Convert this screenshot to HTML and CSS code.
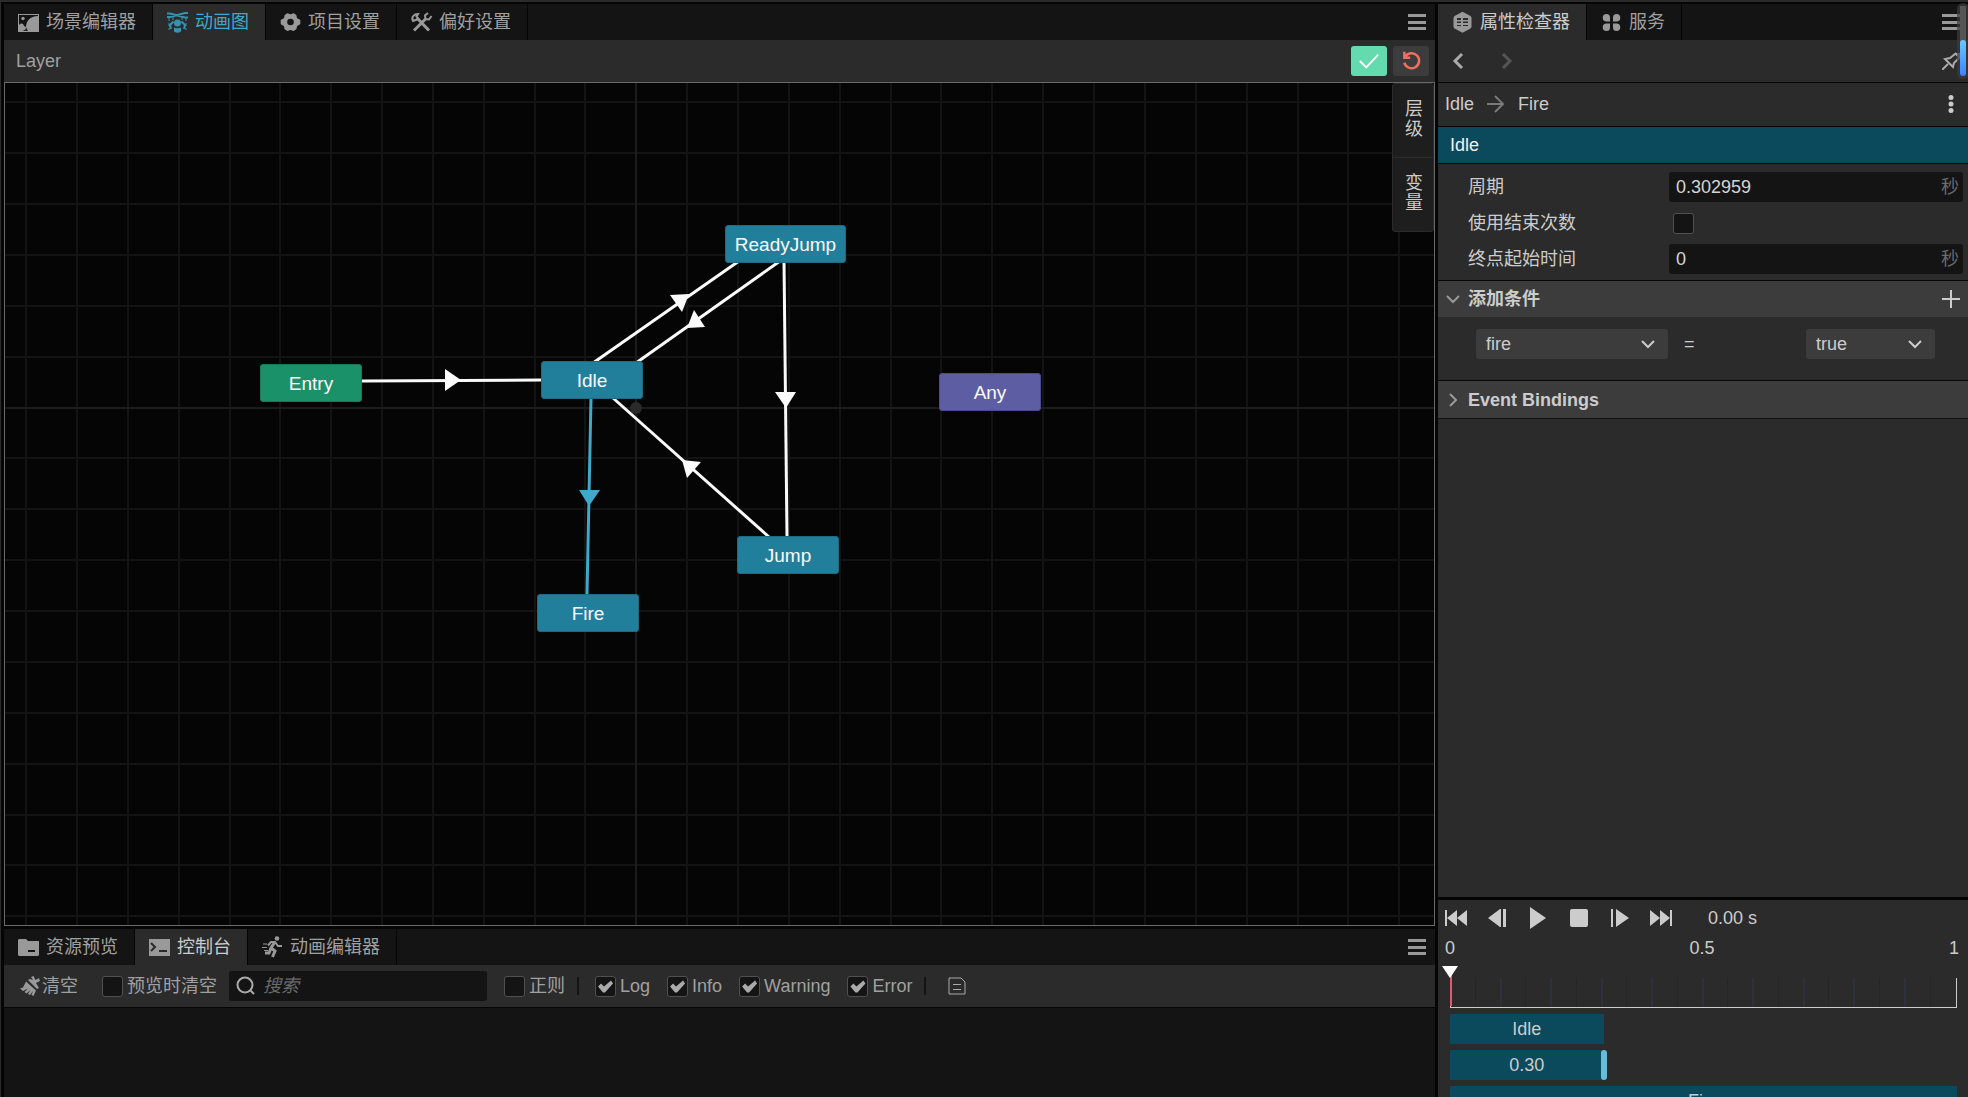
FILE: index.html
```html
<!DOCTYPE html>
<html lang="zh-CN">
<head>
<meta charset="utf-8">
<meta name="viewport" content="width=device-width, initial-scale=1">
<title>动画图</title>
<link rel="stylesheet" href="styles.css">
</head>
<body>
<div class="app">
  <main class="workspace">
    <section class="panel graph-panel">
      <div class="tabbar" role="tablist">
        <button class="tab" role="tab" type="button">
          <svg class="icon" viewBox="0 0 21 21"><path d="M0 2h21v18H0z M1 3v16h19V3z" fill-rule="evenodd"/><circle cx="5" cy="6.500" r="1.700"/><path d="M1 19v-6c2-2 4-2 5 1l2 1c0-6 4-11 12-11v15z"/><path class="cut" d="M4 19c3-.5 4-2 4-4l2 4z"/></svg>
          <span>场景编辑器</span>
        </button>
        <button class="tab tab-on tab-accent" role="tab" type="button" aria-selected="true">
          <svg class="icon" viewBox="0 0 21 21"><path class="line2" d="M0 1.500h3l15 4h3M21 1h-3L3 5H0"/><path class="thin dash" d="M2 6v5M19 6v5M6 5v4M15 5v4M2 11v7M19 11v7"/><circle cx="10.500" cy="11" r="3.500"/><path class="line2" d="M6.500 9.500 3 13l1 4M14.500 9.500 18 13l-1 4"/><path d="M7 15.500c2 1 5 1 7 0v4c-1 1.500-6 1.500-7 0z"/></svg>
          <span>动画图</span>
        </button>
        <button class="tab" role="tab" type="button">
          <svg class="icon" viewBox="0 0 21 21"><path fill-rule="evenodd" d="M7 1.500c1-.8 2 .7 3.500.7S13 .7 14 1.500l2 1.200c1 .7.4 2.600 1.200 3.600.8.900 2.800.8 3.100 2v3.400c-.3 1.200-2.300 1.300-3.100 2.300-.8 1-.2 2.900-1.200 3.600l-2 1.200c-1 .6-2-.7-3.500-.7s-2.500 1.300-3.500.7l-2-1.200c-1-.7-.4-2.600-1.200-3.600S1 13 .7 11.700V8.300c.3-1.200 2.300-1.100 3.100-2S4 3.400 5 2.700zM10.500 6.700a3.300 3.300 0 1 0 0 6.600 3.300 3.300 0 0 0 0-6.600z"/></svg>
          <span>项目设置</span>
        </button>
        <button class="tab" role="tab" type="button">
          <svg class="icon" viewBox="0 0 21 21"><path class="line3" d="M6 6l12 12.500M3 18.500 14.500 7"/><path class="line2" d="M2 9C0 5 3 2 7 2L5.500 4.500 7.500 7z"/><path class="line2" d="M17 1l-3 2.500.5 3.500 3.500.5 2.500-3.500"/></svg>
          <span>偏好设置</span>
        </button>
        <button class="menu" type="button" aria-label="菜单"><svg viewBox="0 0 18 18"><path d="M0 1h18v3H0zM0 8h18v3H0zM0 14h18v3H0z"/></svg></button>
      </div>
      <div class="graph-bar">
        <span class="layer-name">Layer</span>
        <button class="act act-apply" type="button" aria-label="应用"><svg viewBox="0 0 24 24"><path d="M2 12l7 7L22 5"/></svg></button>
        <button class="act act-reset" type="button" aria-label="还原"><svg viewBox="0 0 24 24"><path d="M5 7A9 9 0 1 1 4 14M4 1v7h7"/></svg></button>
      </div>
      <div class="canvas">
        <svg class="wires" aria-hidden="true">
          <g transform="translate(-5 -83)">
            <path class="grid" d="M26 0V2000M77 0V2000M128 0V2000M179 0V2000M230 0V2000M280 0V2000M331 0V2000M382 0V2000M433 0V2000M484 0V2000M535 0V2000M585 0V2000M687 0V2000M738 0V2000M789 0V2000M840 0V2000M891 0V2000M941 0V2000M992 0V2000M1043 0V2000M1094 0V2000M1145 0V2000M1196 0V2000M1247 0V2000M1298 0V2000M1348 0V2000M1399 0V2000M0 102H3000M0 153H3000M0 204H3000M0 255H3000M0 306H3000M0 357H3000M0 458H3000M0 509H3000M0 560H3000M0 611H3000M0 662H3000M0 713H3000M0 764H3000M0 815H3000M0 865H3000M0 916H3000"/>
            <path class="grid axis" d="M636 0V2000M0 408H3000"/>
            <circle class="origin" cx="636" cy="408" r="6"/>
            <g class="wire">
              <path d="M362 381L542 380"/><path class="head" d="M445 369v22l16-11z"/>
              <path d="M593 363L739 261"/><path class="head" d="M670 295l12 17 7-18z"/>
              <path d="M780 261L636 363"/><path class="head" d="M694 310l11 17-18 1z"/>
              <path d="M784 261L787 537"/><path class="head" d="M775 392h21l-10 16z"/>
              <path d="M769 537L613 398"/><path class="head" d="M701 462l-14 16-5-18z"/>
            </g>
            <g class="wire selected">
              <path d="M591 398L587 594"/><path class="head" d="M579 490h21l-11 16z"/>
            </g>
          </g>
        </svg>
        <div class="node entry">Entry</div>
        <div class="node idle">Idle</div>
        <div class="node ready">ReadyJump</div>
        <div class="node any">Any</div>
        <div class="node jump">Jump</div>
        <div class="node fire">Fire</div>
        <div class="side-tabs">
          <button type="button">层级</button>
          <button type="button">变量</button>
        </div>
      </div>
    </section>

    <section class="panel console">
      <div class="tabbar" role="tablist">
        <button class="tab" role="tab" type="button">
          <svg class="icon" viewBox="0 0 21 21"><path fill-rule="evenodd" d="M1 2h7l2 2h11v14l-1 1H1l-1-1V3zM10 13v2h7v-2z"/></svg>
          <span>资源预览</span>
        </button>
        <button class="tab tab-on" role="tab" type="button" aria-selected="true">
          <svg class="icon" viewBox="0 0 21 21"><path d="M0 2h21v17H0z"/><path class="cut" d="M10 13h8v2h-8z"/><path class="cut-line" d="M2 6l4 4-4 4"/></svg>
          <span>控制台</span>
        </button>
        <button class="tab" role="tab" type="button">
          <svg class="icon" viewBox="0 0 21 21"><circle cx="15" cy="1.500" r="2.300"/><path class="line3" d="M12.500 5.500 9 11l4 3-2.500 6M9 11l-2 5H3"/><path class="line2" d="M6 8.500 9 5h4l3 4h4"/><path class="thin" d="M1 7h4M0 10.500h5M2 13.500h4"/></svg>
          <span>动画编辑器</span>
        </button>
        <button class="menu" type="button" aria-label="菜单"><svg viewBox="0 0 18 18"><path d="M0 1h18v3H0zM0 8h18v3H0zM0 14h18v3H0z"/></svg></button>
      </div>
      <div class="console-bar">
        <button class="clear" type="button">
          <svg viewBox="0 0 20 20"><path d="M11 1l2.500-1 2 4L19 2l1 3-4 2 3 5-2 1L8 4l2-1 3 1z"/><path d="M6 5.500l10 9L13.500 20l-2-1 1.500-4-3 4-2-1 2.500-4-4 3.500-2-1.500L8 12.500 3 15l-3-2.500 3-1z"/></svg>
          <span>清空</span>
        </button>
        <label class="check"><input type="checkbox"><span>预览时清空</span></label>
        <div class="search">
          <svg viewBox="0 0 20 20"><circle cx="9" cy="9" r="7.500"/><path d="M14 14l4 4"/></svg>
          <input type="text" placeholder="搜索" aria-label="搜索">
        </div>
        <label class="check regex"><input type="checkbox"><span>正则</span></label>
        <i class="sep"></i>
        <div class="levels">
          <label class="check"><input type="checkbox" checked><span>Log</span></label>
          <label class="check"><input type="checkbox" checked><span>Info</span></label>
          <label class="check"><input type="checkbox" checked><span>Warning</span></label>
          <label class="check"><input type="checkbox" checked><span>Error</span></label>
        </div>
        <i class="sep"></i>
        <button class="log-file" type="button" aria-label="日志文件"><svg viewBox="0 0 18 18"><path d="M1 1h12l4 4v12H1zM5 7.500h8M5 12.500h8"/></svg></button>
      </div>
    </section>
  </main>

  <aside class="sidebar">
    <section class="panel inspector">
      <div class="tabbar" role="tablist">
        <button class="tab tab-on" role="tab" type="button" aria-selected="true">
          <svg class="icon" viewBox="0 0 21 21"><path d="M10 0q.5-.3 1 0l7.500 4 1 1.500v9.500l-1 1.500-7.500 4q-.5.300-1 0l-7.500-4-1-1.500V5.500l1-1.500z"/><path class="cut" d="M5 6h4v2H5zM11 6h5v2h-5zM5 9.500h4v1.500H5zM11 9.500h5v1.500h-5zM5 13h4v1H5zM11 13h5v1h-5z"/></svg>
          <span>属性检查器</span>
        </button>
        <button class="tab" role="tab" type="button">
          <svg class="icon" viewBox="0 0 21 21"><path d="M5.500 2A3.500 3.500 0 0 1 9 5.500v4H5.500a3.700 3.700 0 1 1 0-7.500zM15.500 2a3.700 3.700 0 1 1 0 7.500H12v-4A3.500 3.500 0 0 1 15.500 2zM5.500 19a3.700 3.700 0 1 1 0-7.500H9v4A3.500 3.500 0 0 1 5.500 19zM15.500 19a3.500 3.500 0 0 1-3.500-3.500v-4h3.500a3.700 3.700 0 1 1 0 7.500z"/></svg>
          <span>服务</span>
        </button>
        <button class="menu" type="button" aria-label="菜单"><svg viewBox="0 0 18 18"><path d="M0 1h18v3H0zM0 8h18v3H0zM0 14h18v3H0z"/></svg></button>
      </div>
      <nav class="history">
        <button type="button" aria-label="后退"><svg viewBox="0 0 18 18"><path d="M13 2L6 9l7 7"/></svg></button>
        <button type="button" aria-label="前进" disabled><svg viewBox="0 0 18 18"><path d="M4 2l7 7-7 7"/></svg></button>
        <button class="pin" type="button" aria-label="锁定"><svg viewBox="0 0 18 18"><path d="M0 18l6-6M3 7l8 8 1-4 5-5V2h-4L8 6zM13 1l4 4"/></svg></button>
      </nav>
      <div class="crumbs">
        <span>Idle</span>
        <svg viewBox="0 0 18 18"><path d="M0 9h16M8 1l8 8-8 8"/></svg>
        <span>Fire</span>
        <button type="button" aria-label="更多"><svg viewBox="0 0 18 18"><circle cx="9" cy="2.500" r="2.500"/><circle cx="9" cy="9" r="2.500"/><circle cx="9" cy="15.500" r="2.500"/></svg></button>
      </div>
      <h2 class="state-title">Idle</h2>
      <div class="fields">
        <div class="field"><label for="period">周期</label><div class="num"><input id="period" type="text" value="0.302959"><span>秒</span></div></div>
        <div class="field"><label for="exit">使用结束次数</label><input id="exit" class="box" type="checkbox"></div>
        <div class="field"><label for="dest">终点起始时间</label><div class="num"><input id="dest" type="text" value="0"><span>秒</span></div></div>
      </div>
      <div class="section-head">
        <svg class="fold" viewBox="0 0 14 14"><path d="M1 4l6 6 6-6"/></svg>
        <h3>添加条件</h3>
        <button type="button" aria-label="添加"><svg viewBox="0 0 18 18"><path d="M9 0v18M0 9h18"/></svg></button>
      </div>
      <div class="condition">
        <div class="pick pick-var"><select aria-label="变量"><option>fire</option></select><svg viewBox="0 0 14 14"><path d="M1 4l6 6 6-6"/></svg></div>
        <span class="op">=</span>
        <div class="pick pick-val"><select aria-label="值"><option>true</option><option>false</option></select><svg viewBox="0 0 14 14"><path d="M1 4l6 6 6-6"/></svg></div>
      </div>
      <div class="section-head closed">
        <svg class="fold" viewBox="0 0 14 14"><path d="M4 1l6 6-6 6"/></svg>
        <h3>Event Bindings</h3>
      </div>
    </section>

    <section class="panel preview">
      <div class="transport">
        <button type="button" aria-label="开头"><svg viewBox="0 0 24 24"><path d="M1 4h2v16H1zM13 4v16L3 12zM23 4v16l-10-8z"/></svg></button>
        <button type="button" aria-label="上一帧"><svg viewBox="0 0 24 24"><path d="M15 3v18L3 12zM15 3h1v18h-1zM18 3h3v18h-3z"/></svg></button>
        <button type="button" aria-label="播放"><svg viewBox="0 0 24 24"><path d="M4 1v22l16-11z"/></svg></button>
        <button type="button" aria-label="停止"><svg viewBox="0 0 24 24"><rect x="3" y="3" width="18" height="18" rx="2"/></svg></button>
        <button type="button" aria-label="下一帧"><svg viewBox="0 0 24 24"><path d="M3 3h2v18H3zM8 3v18l13-9z"/></svg></button>
        <button type="button" aria-label="结尾"><svg viewBox="0 0 24 24"><path d="M1 4v16l10-8zM11 4v16l10-8zM21 4h2v16h-2z"/></svg></button>
        <output>0.00 s</output>
      </div>
      <div class="scale"><span>0</span><span>0.5</span><span>1</span></div>
      <div class="ruler">
        <i></i><i></i><i></i><i></i><i></i><i></i><i></i><i></i><i></i><i></i>
        <b class="playhead"></b>
      </div>
      <div class="tracks">
        <div class="bar" style="width:30.3%">Idle</div>
        <div class="bar" style="width:30.3%">0.30<b class="grip"></b></div>
        <div class="bar">Fire</div>
      </div>
    </section>
  </aside>
  <div class="scroller" aria-hidden="true"><i></i></div>
</div>
</body>
</html>
```
FILE: styles.css
```css
* { box-sizing: border-box; }

body {
  margin: 0;
  background: #050505;
  color: #ccc;
  font: 18px/24px "Liberation Sans", "Noto Sans CJK SC", sans-serif;
}

button, input, select {
  margin: 0;
  padding: 0;
  border: 0;
  background: none;
  color: inherit;
  font: inherit;
}

button svg { display: block; }

.app {
  position: relative;
  display: grid;
  grid-template-columns: minmax(0, 1fr) 530px;
  gap: 3px;
  height: 100vh;
  padding: 2px 0 0 3px;
  border-top: 2px solid #2b2b2b;
  border-left: 1px solid #2b2b2b;
  overflow: hidden;
}

.workspace, .sidebar {
  display: flex;
  flex-direction: column;
  gap: 3px;
  min-height: 0;
}

.panel {
  display: flex;
  flex-direction: column;
  min-height: 0;
}

/* Tabs */
.tabbar {
  display: flex;
  flex: none;
  height: 36px;
  padding-right: 9px;
  background: #141414;
  color: #a0a0a0;
}

.sidebar .tabbar { padding-right: 8px; }

.tab {
  display: flex;
  align-items: center;
  gap: 7px;
  padding: 0 16px 0 14px;
  border-right: 1px solid #050505;
  white-space: nowrap;
}

.tab-on { background: #2b2b2b; color: #ccc; }
.tab-accent { color: #3fa9cc; }

.icon {
  width: 21px;
  height: 21px;
  fill: #999;
  color: #999;
  overflow: visible;
}

.tab-accent .icon { fill: #3593b0; color: #3593b0; }
.icon .thin, .icon .line2, .icon .line3 { fill: none; stroke: currentColor; }
.icon .thin { stroke-width: 1; }
.icon .line2 { stroke-width: 2; }
.icon .line3 { stroke-width: 3; }
.icon .dash { stroke-dasharray: 3 2; }
.icon .cut { fill: #2b2b2b; }
.icon .cut-line { fill: none; stroke: #2b2b2b; stroke-width: 2; }

.menu { margin-left: auto; }
.menu svg { width: 18px; height: 18px; fill: #999; }

/* State graph */
.graph-panel { flex: 1; }

.graph-bar {
  display: flex;
  flex: none;
  align-items: center;
  gap: 6px;
  height: 42px;
  padding: 0 6px 0 12px;
  background: #2b2b2b;
}

.layer-name { flex: 1; color: #a0a0a0; }

.act {
  display: grid;
  place-items: center;
  width: 36px;
  height: 30px;
  border-radius: 3px;
}

.act svg { width: 22px; height: 22px; fill: none; stroke-width: 2; }
.act-apply { background: #64dbae; stroke: #fff; }
.act-reset { background: #3c3c3c; stroke: #f0705f; }
.act-reset svg { width: 20px; height: 20px; stroke-width: 3; }

.canvas {
  position: relative;
  flex: 1;
  min-height: 0;
  border: 1px solid #6a6a6a;
  background: #050505;
  overflow: hidden;
}

.wires { display: block; width: 100%; height: 100%; }
.grid { fill: none; stroke: #131313; stroke-width: 2; }
.axis { stroke: #1c1c1c; }
.origin { fill: #2a2a2a; }
.wire { fill: none; stroke: #fafafa; stroke-width: 3; }
.wire .head { fill: #fafafa; stroke: none; }
.selected { stroke: #3fa9cc; }
.selected .head { fill: #3fa9cc; }

.node {
  position: absolute;
  width: 102px;
  height: 38px;
  border: 1px solid #1d6a82;
  border-radius: 3px;
  background: #227f9b;
  color: #fafafa;
  font-size: 19px;
  line-height: 37px;
  text-align: center;
}

.entry { left: 255px; top: 281px; border-color: #167a59; background: #1b916a; }
.idle { left: 536px; top: 278px; }
.ready { left: 720px; top: 142px; width: 121px; }
.any { left: 934px; top: 290px; border-color: #4c4c8c; background: #5d5da3; }
.jump { left: 732px; top: 453px; }
.fire { left: 532px; top: 511px; }

.side-tabs {
  position: absolute;
  top: 0;
  right: 0;
  width: 42px;
  border: 1px solid #2b2b2b;
  border-radius: 3px;
  background: #1e1e1e;
}

.side-tabs button {
  display: block;
  width: 40px;
  height: 73px;
  padding: 14px 10px 18px 12px;
  line-height: 20px;
  word-break: break-all;
}

.side-tabs button + button { height: 74px; border-top: 1px solid #2b2b2b; }

/* Console */
.console {
  flex: none;
  height: 168px;
  background: #141414;
}

.console-bar {
  display: flex;
  flex: none;
  align-items: center;
  height: 43px;
  padding-left: 16px;
  border-bottom: 1px solid #050505;
  background: #2b2b2b;
  color: #a0a0a0;
  white-space: nowrap;
}

.clear { display: flex; align-items: center; gap: 2px; margin-right: 24px; }
.clear svg { width: 20px; height: 20px; fill: #999; }
.check { display: flex; align-items: center; gap: 4px; }

input[type="checkbox"] {
  appearance: none;
  flex: none;
  width: 21px;
  height: 21px;
  border: 1px solid #505050;
  border-radius: 3px;
  background: #141414;
}

input[type="checkbox"]:checked::before {
  content: "";
  display: block;
  width: 19px;
  height: 19px;
  background: #aaa;
  clip-path: polygon(2px 10px, 5px 7px, 8px 10px, 15px 4px, 17px 7px, 9px 16px, 7px 16px);
}

.search {
  display: flex;
  align-items: center;
  gap: 7px;
  width: 258px;
  height: 30px;
  margin: 0 17px 0 12px;
  padding: 0 8px 0 7px;
  border-radius: 3px;
  background: #141414;
}

.search svg { flex: none; width: 20px; height: 20px; fill: none; stroke: #aaa; stroke-width: 2; }
.search input { flex: 1; min-width: 0; outline: 0; }
.search input::placeholder { color: #6a6a6a; font-style: italic; }

.sep { width: 2px; height: 18px; margin: 0 16px 0 12px; background: #141414; }
.levels { display: flex; gap: 17px; }
.log-file { margin-left: 6px; }
.log-file svg { width: 18px; height: 18px; fill: none; stroke: #aaa; stroke-width: 1; }

/* Inspector */
.inspector { flex: 1; background: #2b2b2b; }

.history {
  display: flex;
  flex: none;
  align-items: center;
  gap: 32px;
  height: 43px;
  padding: 0 8px 0 11px;
  border-bottom: 1px solid #050505;
}

.history svg { width: 18px; height: 18px; fill: none; stroke: #aaa; stroke-width: 3; }
.history button:disabled svg { stroke: #555; }
.history .pin { margin-left: auto; }
.history .pin svg { stroke-width: 2; }

.crumbs {
  display: flex;
  flex: none;
  align-items: center;
  gap: 13px;
  height: 44px;
  padding: 0 8px 2px 7px;
  border-bottom: 1px solid #050505;
}

.crumbs svg { width: 18px; height: 18px; fill: none; stroke: #7a7a7a; stroke-width: 2; }
.crumbs button { margin-left: auto; }
.crumbs button svg { fill: #ccc; stroke: none; }

.state-title {
  flex: none;
  height: 37px;
  margin: 0;
  padding-left: 12px;
  border-bottom: 1px solid #050505;
  background: #0a4a5c;
  color: #f0f0f0;
  font-size: 18px;
  font-weight: 400;
  line-height: 36px;
}

.fields {
  display: grid;
  gap: 6px;
  padding: 8px 5px 6px 30px;
}

.field {
  display: grid;
  grid-template-columns: 201px minmax(0, 1fr);
  align-items: center;
  height: 30px;
}

.num {
  display: flex;
  height: 30px;
  padding: 0 4px 0 7px;
  border-radius: 3px;
  background: #141414;
  line-height: 30px;
}

.num input { flex: 1; min-width: 0; color: #d4d4d4; outline: 0; }
.num span { color: #6a6a6a; }
.box { margin-left: 4px; }

.section-head {
  display: flex;
  flex: none;
  align-items: center;
  gap: 8px;
  height: 37px;
  padding: 0 8px;
  border-top: 1px solid #050505;
  background: #3c3c3c;
}

.section-head.closed { height: 39px; border-bottom: 1px solid #141414; }
.section-head h3 { flex: 1; margin: 0; font-size: 18px; line-height: 24px; }
.section-head svg { width: 18px; height: 18px; fill: none; stroke: #ccc; stroke-width: 2; }
.section-head .fold { width: 14px; height: 14px; stroke: #999; }

.condition {
  display: flex;
  flex: none;
  height: 63px;
  padding: 12px 33px 21px 38px;
}

.pick { position: relative; height: 30px; border-radius: 3px; background: #3c3c3c; }
.pick select { appearance: none; width: 100%; height: 30px; padding: 0 36px 0 10px; outline: 0; }
.pick option { background: #3c3c3c; }

.pick svg {
  position: absolute;
  top: 8px;
  right: 13px;
  width: 14px;
  height: 14px;
  fill: none;
  stroke: #ccc;
  stroke-width: 2;
  pointer-events: none;
}

.pick-var { width: 192px; }
.pick-val { width: 129px; margin-left: auto; }
.op { margin-left: 16px; line-height: 30px; }

/* Transition preview */
.preview {
  flex: none;
  height: 197px;
  background: #2b2b2b;
  overflow: hidden;
}

.transport {
  display: flex;
  flex: none;
  align-items: center;
  gap: 17px;
  height: 36px;
  padding-left: 6px;
}

.transport svg { width: 24px; height: 24px; fill: #ccc; }
.transport output { margin-left: 18px; }

.scale {
  display: flex;
  justify-content: space-between;
  flex: none;
  height: 24px;
  padding: 0 9px 0 7px;
}

.ruler {
  position: relative;
  display: grid;
  grid-template-columns: repeat(10, 1fr);
  flex: none;
  height: 30px;
  margin: 18px 11px 0 12px;
  border: 1px solid #ccc;
  border-top: 0;
}

.ruler i {
  border-right: 2px solid #2f303e;
  background: linear-gradient(#262626, #262626) center / 1px 100% no-repeat;
}

.ruler i:nth-child(10) { border-right: 0; }

.playhead {
  position: absolute;
  top: -12px;
  left: -1px;
  width: 2px;
  height: 40px;
  background: #e0596c;
}

.playhead::before {
  content: "";
  position: absolute;
  left: -8px;
  width: 16px;
  height: 12px;
  background: #fff;
  clip-path: polygon(0 0, 100% 0, 50% 100%);
}

.tracks {
  display: grid;
  gap: 6px;
  margin: 6px 11px 0 12px;
}

.bar {
  position: relative;
  height: 30px;
  background: #0a4a5c;
  line-height: 30px;
  text-align: center;
}

.grip {
  position: absolute;
  top: 0;
  right: -3px;
  width: 6px;
  height: 30px;
  border-radius: 3px;
  background: #65bddb;
}

/* Floating scroll indicator */
.scroller {
  position: absolute;
  top: 1px;
  right: -1px;
  width: 12px;
  height: 76px;
  padding: 3px;
  border-radius: 6px;
  background: linear-gradient(#555, #555) center 3px / 6px 60px no-repeat, rgba(60, 60, 60, 0.7);
}

.scroller i {
  display: block;
  width: 6px;
  height: 36px;
  margin-top: 34px;
  border-radius: 3px;
  background: linear-gradient(#6cc8ff, #3c82ff);
}
```
